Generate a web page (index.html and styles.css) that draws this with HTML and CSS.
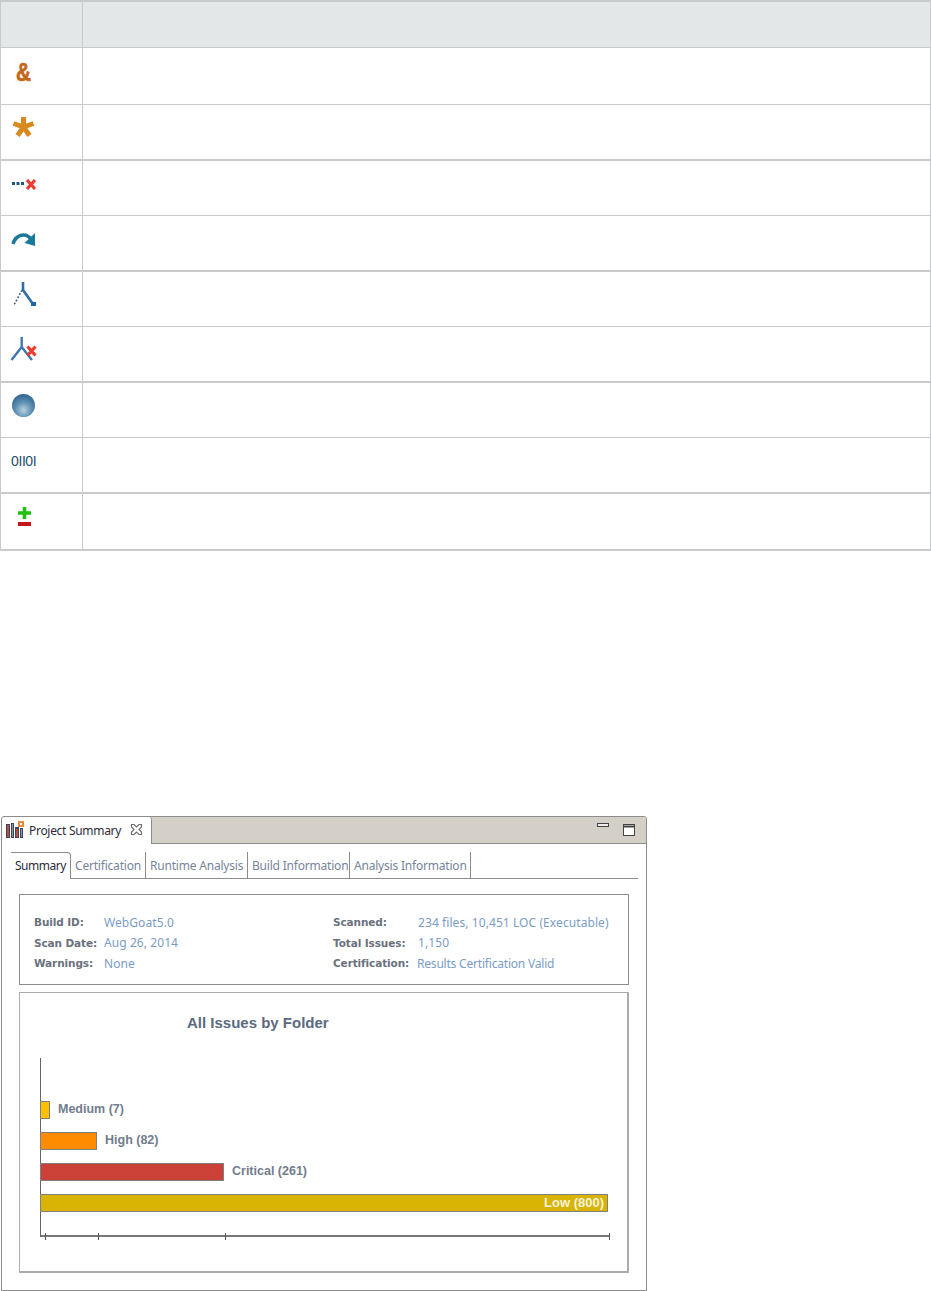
FILE: index.html
```html
<!DOCTYPE html>
<html lang="en">
<head>
<meta charset="utf-8">
<title>Project Summary</title>
<link rel="stylesheet" href="styles.css">
</head>
<body>
<div class="legend">
  <div class="row head"><div class="c1"></div><div class="c2"></div></div>
  <div class="row h57"><div class="c1"><svg class="ico" viewBox="0 0 24 24"><text transform="translate(12.500 23) scale(0.8 1)" text-anchor="middle" class="amp">&amp;</text></svg></div><div class="c2"></div></div>
  <div class="row h56 thick"><div class="c1"><svg class="ico" viewBox="0 0 24 24"><g stroke="#d98a1f" stroke-width="5"><path d="M12.500 2V12M12.500 12L2.500 8.500M12.500 12L22.500 8.500M12.500 12L6.500 20.500M12.500 12L18.500 20.500"/></g></svg></div><div class="c2"></div></div>
  <div class="row h55"><div class="c1"><svg class="ico" viewBox="0 0 24 24"><path d="M1 11h3v3H1zM5.500 11h3v3h-3zM10 11h3v3h-3z" fill="#1f5a7e"/><path d="M16 9l8 9M24 9l-8 9" stroke="#ee3b2f" stroke-width="3.200"/></svg></div><div class="c2"></div></div>
  <div class="row h56 thick"><div class="c1"><svg class="ico" viewBox="0 0 24 24"><path d="M2 18C5 8 15 6 21 14" fill="none" stroke="#1b7a9a" stroke-width="3.600"/><path d="M24 7V20L13.500 17z" fill="#1b7a9a"/></svg></div><div class="c2"></div></div>
  <div class="row h55"><div class="c1"><svg class="ico" viewBox="0 0 24 24"><path d="M11 8L3 23" stroke="#3c5f80" stroke-width="1.500" stroke-dasharray="2 1.600" fill="none"/><path d="M12 0v8L22 22" stroke="#2e6ca4" stroke-width="2.600" fill="none"/><path d="M20 20h5v4h-5z" fill="#1f66a8"/></svg></div><div class="c2"></div></div>
  <div class="row h56 thick"><div class="c1"><svg class="ico" viewBox="0 0 24 24"><path d="M10.700 0v11M10.700 10L0.500 23M10.700 10L21 23" stroke="#3c78ad" stroke-width="2.400" fill="none"/><path d="M16.500 9.500l8 9M24.500 9.500l-8 9" stroke="#ee3b2f" stroke-width="3.200"/></svg></div><div class="c2"></div></div>
  <div class="row h55"><div class="c1"><svg class="ico" viewBox="0 0 24 24"><defs><radialGradient id="orb" cx="0.500" cy="0.700" r="0.700"><stop offset="0" stop-color="#b6d3e2"/><stop offset="0.500" stop-color="#5f90b3"/><stop offset="1" stop-color="#2f6490"/></radialGradient></defs><circle cx="12.500" cy="12.500" r="11.500" fill="url(#orb)"/></svg></div><div class="c2"></div></div>
  <div class="row h56 thick"><div class="c1"><span class="bin">0II0I</span></div><div class="c2"></div></div>
  <div class="row h57 last"><div class="c1"><svg class="ico" viewBox="0 0 24 24"><path d="M13.500 3v12M7 9h13" stroke="#1fc00e" stroke-width="3.600"/><path d="M7 18h13v4H7z" fill="#c4171c"/></svg></div><div class="c2"></div></div>
</div>

<section class="panel">
  <header class="viewbar">
    <div class="viewtab">
      <svg class="appicon" viewBox="0 0 18 18"><path d="M0 3h4v14H0zM5 2h3v15H5zM9 6h4v11H9zM14 7h3v10h-3z" fill="#3d4658"/><path d="M1 4h2v12H1zM10 8h2v8h-2z" fill="#b5503f"/><path d="M6 3h1v13H6zM15 8h1v8h-1z" fill="#7d97b5"/><path d="M12 0h6v6h-6z" fill="#e58a3a"/><path d="M14 2h2v2h-2z" fill="#fff"/></svg>
      <span class="viewtitle">Project Summary</span>
      <svg class="close" viewBox="0 0 13 13"><path d="M1.500 1.500h2.500L6.500 4 9 1.500h2.500v2.500L9 6.500 11.500 9v2.500H9L6.500 9 4 11.500H1.500V9L4 6.500 1.500 4z" fill="#fff" stroke="#6f6f6f" stroke-width="1.200"/></svg>
    </div>
    <div class="winbtns">
      <svg class="minbtn" viewBox="0 0 12 4"><rect x="0.500" y="0.500" width="11" height="3" fill="#eee" stroke="#444"/></svg>
      <svg class="maxbtn" viewBox="0 0 12 12"><rect x="0.500" y="0.500" width="11" height="11" fill="#fff" stroke="#444"/><path d="M1 2.500h10" stroke="#444" stroke-width="2"/></svg>
    </div>
  </header>
  <div class="content">
    <nav class="tabs">
      <span class="tab active">Summary</span>
      <span class="tab t2">Certification</span>
      <span class="tab t3">Runtime Analysis</span>
      <span class="tab t4">Build Information</span>
      <span class="tab t5">Analysis Information</span>
    </nav>
    <div class="info">
      <div class="pair left"><b>Build ID:</b><span>WebGoat5.0</span></div>
      <div class="pair right"><b>Scanned:</b><span>234 files, 10,451 LOC (Executable)</span></div>
      <div class="pair left"><b>Scan Date:</b><span>Aug 26, 2014</span></div>
      <div class="pair right"><b>Total Issues:</b><span>1,150</span></div>
      <div class="pair left"><b>Warnings:</b><span>None</span></div>
      <div class="pair right"><b>Certification:</b><span class="tight">Results Certification Valid</span></div>
    </div>
    <div class="chart">
      <h2 class="chart-title">All Issues by Folder</h2>
      <div class="plot">
        <div class="bar-row"><div class="bar medium" style="width:10px"></div><span class="bar-label">Medium (7)</span></div>
        <div class="bar-row"><div class="bar high" style="width:57px"></div><span class="bar-label">High (82)</span></div>
        <div class="bar-row"><div class="bar critical" style="width:184px"></div><span class="bar-label">Critical (261)</span></div>
        <div class="bar-row"><div class="bar low" style="width:568px"><span class="bar-inner">Low (800)</span></div></div>
      </div>
      <svg class="ticks" viewBox="0 0 580 7"><path d="M5.500 0v7M58.500 0v7M185.500 0v7M569.500 0v7" stroke="#555" fill="none"/></svg>
    </div>
  </div>
</section>
</body>
</html>
```
FILE: styles.css
```css
* { box-sizing: border-box; }
html, body { margin: 0; padding: 0; background: #fff; }
body { width: 931px; height: 1291px; overflow: hidden; font-family: "Noto Sans", sans-serif; }

.legend { border-top: 2px solid #c9cacb; border-left: 1px solid #c9cacb; border-right: 1px solid #c9cacb; }
.row { display: flex; border-bottom: 1px solid #c9cacb; }
.row.thick { border-bottom-width: 2px; }
.head { height: 46px; background: #e4e7e8; }
.h57 { height: 57px; }
.h56 { height: 56px; }
.h55 { height: 55px; }
.last { height: 57px; border-bottom-width: 2px; }
.c1 { width: 82px; border-right: 1px solid #c9cacb; padding: 10px 0 0 10px; }
.c2 { flex: 1; }
.ico { display: block; width: 24px; height: 24px; overflow: visible; }
.amp { font: bold 26px "Liberation Sans", sans-serif; fill: #c4661a; stroke: #c4661a; stroke-width: 0.7px; }
.bin { display: block; width: 26px; margin-top: 2px; font: 14px/22px "Liberation Sans", sans-serif; color: #234f6b; letter-spacing: -0.4px; }

.panel { width: 646px; height: 475px; margin: 265px 0 0 1px; border: 1px solid #8c8c8c; border-radius: 3px 3px 0 0; background: #fff; display: flex; flex-direction: column; }
.viewbar { height: 27px; background: #d4d0c8; border-bottom: 1px solid #8c8c8c; display: flex; justify-content: space-between; border-radius: 3px 3px 0 0; }
.viewtab { width: 150px; height: 27px; background: #fff; border-right: 1px solid #8c8c8c; display: flex; align-items: center; padding-left: 4px; border-radius: 3px 3px 0 0; }
.appicon { width: 18px; height: 18px; flex: none; margin-top: -1px; }
.viewtitle { font-size: 12px; color: #2c2c3a; margin-left: 5px; width: 93px; white-space: nowrap; letter-spacing: -0.3px; }
.close { width: 13px; height: 13px; margin-left: 8px; margin-top: -2px; }
.winbtns { display: flex; gap: 14px; padding: 6px 11px 0 0; }
.minbtn { width: 12px; height: 4px; }
.maxbtn { width: 12px; height: 12px; margin-top: 1px; }

.content { padding: 8px 8px 0 9px; flex: 1; }
.tabs { height: 27px; display: flex; border-bottom: 1px solid #8c8c8c; width: 627px; font-size: 12px; color: #75849a; white-space: nowrap; }
.tab { height: 26px; padding: 0 4px; border-right: 1px solid #8c8c8c; line-height: 28px; letter-spacing: -0.2px; }
.tab.active { width: 60px; height: 27px; color: #2c2c3a; border-top: 1px solid #8c8c8c; border-radius: 0 4px 0 0; background: #fff; margin-bottom: -1px; padding-left: 4px; line-height: 26px; letter-spacing: -0.5px; }
.t2 { width: 75px; }
.t3 { width: 102px; }
.t4 { width: 102px; }
.t5 { width: 121px; }

.info { width: 610px; height: 91px; margin: 15px 0 0 8px; border: 1px solid #8c8c8c; padding: 17px 0 0 14px; display: grid; grid-template-columns: 299px 1fr; grid-auto-rows: 20.5px; }
.pair { display: flex; align-items: center; font-size: 12px; color: #7a9cc6; white-space: nowrap; letter-spacing: 0.08px; }
.pair b { font: bold 10.5px "DejaVu Sans", sans-serif; color: #6a717c; letter-spacing: -0.1px; }
.left b { width: 70px; }
.right b { width: 85px; }
.pair .tight { margin-left: -1px; letter-spacing: -0.2px; }

.chart { width: 610px; height: 281px; margin: 7px 0 0 8px; border-style: solid; border-color: #ababab; border-width: 1px 2px 2px 1px; }
.chart-title { margin: 21px 0 0 167px; font: bold 15px/18px "Liberation Sans", sans-serif; color: #5b6a80; }
.plot { width: 569px; height: 179px; margin: 26px 0 0 20px; border-left: 1px solid #666; border-bottom: 2px solid #777; padding-top: 43px; display: flex; flex-direction: column; gap: 13px; }
.bar-row { display: flex; align-items: center; height: 18px; gap: 8px; }
.bar { height: 18px; border: 1px solid #808080; margin-left: -1px; display: flex; align-items: center; justify-content: flex-end; flex: none; }
.medium { background: #ffc000; }
.high { background: #ff8c00; }
.critical { background: #cb4037; }
.low { background: #d9b404; }
.bar-label { margin-top: -2px; font: bold 12.5px "Liberation Sans", sans-serif; color: #727d8d; }
.bar-inner { margin-top: -2px; font: bold 13px "Liberation Sans", sans-serif; color: #f5f2df; padding-right: 3px; }
.ticks { display: block; width: 580px; height: 7px; margin: -4px 0 0 20px; overflow: visible; }
```
